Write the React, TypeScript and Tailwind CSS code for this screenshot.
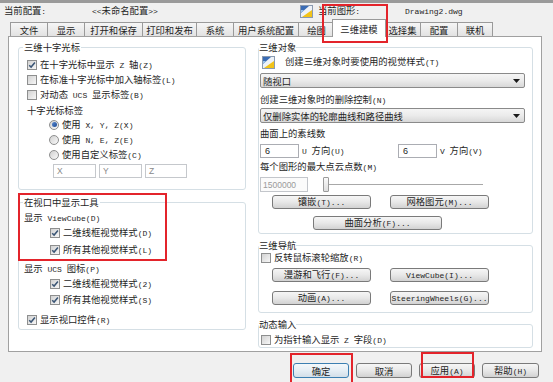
import React from "react";

function T({ s }: { s: string }) {
  const parts = s.match(/[\x20-\x7E]+|[^\x20-\x7E]+/g) || [];
  return (
    <span className="whitespace-pre">
      {parts.map((p, i) =>
        /^[\x20-\x7E]+$/.test(p) ? (
          <span key={i} className="font-['Liberation_Mono',monospace] text-[8px]">
            {p}
          </span>
        ) : (
          <span key={i}>{p}</span>
        )
      )}
    </span>
  );
}

function Check({ on }: { on?: boolean }) {
  return (
    <span className="w-[10px] h-[10px] shrink-0 border border-[#8e8f8f] bg-white flex items-center justify-center">
      <span className="w-[8px] h-[8px] bg-linear-to-br from-[#d2d2d2] to-[#f7f7f7] flex items-center justify-center">
        {on && (
          <svg width="8" height="8" viewBox="0 0 8 8">
            <path d="M1.2 4.2 L3.1 6.1 L6.9 1.6" stroke="#3a5575" strokeWidth="1.5" fill="none" />
          </svg>
        )}
      </span>
    </span>
  );
}

function Radio({ on }: { on?: boolean }) {
  return (
    <span className="w-[10px] h-[10px] shrink-0 rounded-full border border-[#8e8f8f] bg-linear-to-br from-[#d0d0d0] to-[#fafafa] flex items-center justify-center">
      {on && <span className="w-[5px] h-[5px] rounded-full bg-linear-to-br from-[#5a8ad0] to-[#1c4a94]" />}
    </span>
  );
}

function Btn({ s, className }: { s: string; className: string }) {
  return (
    <div
      className={
        "h-[14px] shrink-0 border border-[#7a7a7a] rounded-[3px] bg-linear-to-b from-[#f6f6f6] via-[#e8e8e8] to-[#d2d2d2] flex items-center justify-center " +
        className
      }
    >
      <T s={s} />
    </div>
  );
}

function DwgIcon() {
  return (
    <svg width="13" height="13" viewBox="0 0 13 13" className="shrink-0">
      <rect x="0.5" y="0.5" width="12" height="12" fill="#eef2f7" stroke="#8a9ab0" />
      <path d="M1 1 H9 L1 8 Z" fill="#3a6cb5" />
      <path d="M1 5 H4 L1 8 Z" fill="#9cc3ea" />
      <path d="M2 12 L12 5 V12 Z" fill="#f2c318" />
    </svg>
  );
}

function Select({ s }: { s: string }) {
  return (
    <div className="ml-[1px] h-[15px] w-[265px] border border-[#8a8a8a] rounded-[2px] bg-linear-to-b from-[#f5f5f5] via-[#ebebeb] to-[#d8d8d8] flex items-center pl-[2px] pr-[4px]">
      <T s={s} />
      <svg width="7" height="4" viewBox="0 0 7 4" className="ml-auto">
        <path d="M0 0 H7 L3.5 4 Z" fill="#1a1a1a" />
      </svg>
    </div>
  );
}

const tabs: { s: string; w: string; sel?: boolean; last?: boolean }[] = [
  { s: "文件", w: "w-[37px]" },
  { s: "显示", w: "w-[37px]" },
  { s: "打开和保存", w: "w-[58px]" },
  { s: "打印和发布", w: "w-[54px]" },
  { s: "系统", w: "w-[37px]" },
  { s: "用户系统配置", w: "w-[65px]" },
  { s: "绘图", w: "w-[36px]" },
  { s: "三维建模", w: "w-[54px]", sel: true },
  { s: "选择集", w: "w-[36px]" },
  { s: "配置", w: "w-[37px]" },
  { s: "联机", w: "w-[36px]", last: true },
];

export default function App() {
  return (
    <div className="relative w-[553px] h-[382px] overflow-hidden bg-[#f0f0f0] font-['Noto_Sans_CJK_SC',sans-serif] text-[9.33px] leading-[12px] text-[#1e1e1e]">
      {/* top strip */}
      <div className="h-[3px] bg-[#9a9a9a]" />
      {/* header */}
      <div className="h-[16px] flex items-center pl-[4px]">
        <div className="w-[88px]">
          <T s="当前配置:" />
        </div>
        <div className="w-[208px]">
          <T s="<<未命名配置>>" />
        </div>
        <DwgIcon />
        <div className="ml-[5px] w-[87px]">
          <T s="当前图形:" />
        </div>
        <T s="Drawing2.dwg" />
      </div>
      {/* tabs */}
      <div className="h-[17px] flex items-end pl-[10px]">
        {tabs.map((t) =>
          t.sel ? (
            <div
              key={t.s}
              className={
                "relative z-10 h-[18px] -mb-[1px] -mx-[2px] border-t border-l border-r border-[#9a9a9a] bg-white flex items-center justify-center " +
                t.w
              }
            >
              <T s={t.s} />
            </div>
          ) : (
            <div
              key={t.s}
              className={
                "h-[14px] border-t border-l border-[#9a9a9a] bg-linear-to-b from-[#f6f6f6] to-[#e2e2e2] flex items-center justify-center " +
                t.w +
                (t.last ? " border-r" : "")
              }
            >
              <T s={t.s} />
            </div>
          )
        )}
      </div>
      {/* panel */}
      <div className="ml-[8px] w-[534px] h-[316px] border border-[#a0a0a0] bg-white pt-[4px] pl-[9px] pr-[8px] flex gap-[12px]">
        {/* left column */}
        <div className="w-[228px] flex flex-col">
          <fieldset className="border border-[#d5dfe5] rounded-[3px] pb-[11px]">
            <legend className="ml-[4px] px-[1px] leading-[12px]">
              <T s="三维十字光标" />
            </legend>
            <div className="mt-[4px] h-[15px] flex items-center pl-[8px] gap-[3px]">
              <Check on />
              <T s="在十字光标中显示 Z 轴(Z)" />
            </div>
            <div className="h-[15px] flex items-center pl-[8px] gap-[3px]">
              <Check />
              <T s="在标准十字光标中加入轴标签(L)" />
            </div>
            <div className="h-[15px] flex items-center pl-[8px] gap-[3px]">
              <Check />
              <T s="对动态 UCS 显示标签(B)" />
            </div>
            <div className="h-[15px] flex items-center pl-[8px]">
              <T s="十字光标标签" />
            </div>
            <div className="h-[15px] flex items-center pl-[30px] gap-[3px]">
              <Radio on />
              <T s="使用 X, Y, Z(X)" />
            </div>
            <div className="h-[15px] flex items-center pl-[30px] gap-[3px]">
              <Radio />
              <T s="使用 N, E, Z(E)" />
            </div>
            <div className="h-[15px] flex items-center pl-[30px] gap-[3px]">
              <Radio />
              <T s="使用自定义标签(C)" />
            </div>
            <div className="mt-[2px] h-[14px] flex pl-[34px] gap-[3px] font-['Liberation_Sans',sans-serif] text-[8.5px] text-[#8a8a8a]">
              <div className="w-[43px] h-[14px] border border-[#c5c8cc] bg-white flex items-center pl-[3px]">X</div>
              <div className="w-[43px] h-[14px] border border-[#c5c8cc] bg-white flex items-center pl-[3px]">Y</div>
              <div className="w-[42px] h-[14px] border border-[#c5c8cc] bg-white flex items-center pl-[3px]">Z</div>
            </div>
          </fieldset>
          <fieldset className="mt-[6px] border border-[#d5dfe5] rounded-[3px] pb-[1px]">
            <legend className="ml-[4px] px-[1px] leading-[12px]">
              <T s="在视口中显示工具" />
            </legend>
            <div className="mt-[2px] h-[16px] flex items-center pl-[5px]">
              <T s="显示 ViewCube(D)" />
            </div>
            <div className="h-[14px] flex items-center pl-[31px] gap-[3px]">
              <Check on />
              <T s="二维线框视觉样式(D)" />
            </div>
            <div className="mt-[2px] h-[16px] flex items-center pl-[31px] gap-[3px]">
              <Check on />
              <T s="所有其他视觉样式(L)" />
            </div>
            <div className="mt-[3px] h-[16px] flex items-center pl-[5px]">
              <T s="显示 UCS 图标(P)" />
            </div>
            <div className="h-[13px] flex items-center pl-[31px] gap-[3px]">
              <Check on />
              <T s="二维线框视觉样式(2)" />
            </div>
            <div className="mt-[2px] h-[16px] flex items-center pl-[31px] gap-[3px]">
              <Check on />
              <T s="所有其他视觉样式(S)" />
            </div>
            <div className="mt-[4px] h-[16px] flex items-center pl-[8px] gap-[3px]">
              <Check on />
              <T s="显示视口控件(R)" />
            </div>
          </fieldset>
        </div>
        {/* right column */}
        <div className="w-[275px] flex flex-col">
          <fieldset className="border border-[#d5dfe5] rounded-[3px] pb-[3px]">
            <legend className="leading-[12px]">
              <T s="三维对象" />
            </legend>
            <div className="mt-[2px] h-[14px] flex items-center pl-[3px]">
              <DwgIcon />
              <span className="ml-[10px]">
                <T s="创建三维对象时要使用的视觉样式(T)" />
              </span>
            </div>
            <div className="mt-[4px]">
              <Select s="随视口" />
            </div>
            <div className="mt-[5px] h-[14px] flex items-center pl-[1px]">
              <T s="创建三维对象时的删除控制(N)" />
            </div>
            <div className="mt-[1px]">
              <Select s="仅删除实体的轮廓曲线和路径曲线" />
            </div>
            <div className="mt-[3px] h-[14px] flex items-center pl-[1px]">
              <T s="曲面上的素线数" />
            </div>
            <div className="mt-[4px] h-[14px] flex items-center pl-[1px]">
              <div className="w-[39px] h-[14px] border border-[#abadb3] bg-white flex items-center pl-[4px] font-['Liberation_Sans',sans-serif] text-[9px]">
                6
              </div>
              <div className="ml-[3px] w-[96px]">
                <T s="U 方向(U)" />
              </div>
              <div className="w-[39px] h-[14px] border border-[#abadb3] bg-white flex items-center pl-[4px] font-['Liberation_Sans',sans-serif] text-[9px]">
                6
              </div>
              <div className="ml-[3px]">
                <T s="V 方向(V)" />
              </div>
            </div>
            <div className="mt-[2px] h-[14px] flex items-center pl-[1px]">
              <T s="每个图形的最大点云点数(M)" />
            </div>
            <div className="mt-[3px] h-[15px] flex items-center pl-[1px]">
              <div className="w-[48px] h-[15px] border border-[#c3c6cb] bg-[#fbfbfb] flex items-center pl-[2px] font-['Liberation_Sans',sans-serif] text-[8.5px] text-[#9a9a9a]">
                1500000
              </div>
              <div className="ml-[15px] w-[6px] h-[15px] border border-[#9a9a9a] rounded-[1px] bg-linear-to-b from-[#fafafa] to-[#dedede]" />
              <div className="w-[154px] h-[2px] border-t border-[#a8a8a8] border-b border-b-white bg-[#e4e4e4] mt-[1px]" />
            </div>
            <div className="mt-[3px] h-[14px] flex items-center pl-[13px] gap-[19px]">
              <Btn s="镶嵌(T)..." className="w-[99px]" />
              <Btn s="网格图元(M)..." className="w-[99px]" />
            </div>
            <div className="mt-[7px] h-[14px] flex items-center pl-[54px]">
              <Btn s="曲面分析(F)..." className="w-[129px]" />
            </div>
          </fieldset>
          <fieldset className="mt-[5px] border border-[#d5dfe5] rounded-[3px] pb-[7px]">
            <legend className="leading-[12px]">
              <T s="三维导航" />
            </legend>
            <div className="h-[14px] flex items-center pl-[2px] gap-[3px]">
              <Check />
              <T s="反转鼠标滚轮缩放(R)" />
            </div>
            <div className="mt-[3px] h-[14px] flex items-center pl-[13px] gap-[19px]">
              <Btn s="漫游和飞行(F)..." className="w-[99px]" />
              <Btn s="ViewCube(I)..." className="w-[99px]" />
            </div>
            <div className="mt-[9px] h-[14px] flex items-center pl-[13px] gap-[19px]">
              <Btn s="动画(A)..." className="w-[99px]" />
              <Btn s="SteeringWheels(G)..." className="w-[99px]" />
            </div>
          </fieldset>
          <fieldset className="mt-[5px] border border-[#d5dfe5] rounded-[3px]">
            <legend className="leading-[12px]">
              <T s="动态输入" />
            </legend>
            <div className="mt-[3px] h-[14px] flex items-center pl-[2px] gap-[3px]">
              <Check />
              <T s="为指针输入显示 Z 字段(D)" />
            </div>
          </fieldset>
        </div>
      </div>
      {/* bottom buttons */}
      <div className="mt-[11px] h-[15px] flex pl-[293px] gap-[7px]">
        <div className="w-[56px] h-[15px] border border-[#3c7fb1] rounded-[3px] bg-linear-to-b from-[#f4f8fb] via-[#e6eef4] to-[#d3dfe8] flex items-center justify-center">
          <T s="确定" />
        </div>
        <Btn s="取消" className="w-[56px] h-[15px]" />
        <Btn s="应用(A)" className="w-[56px] h-[15px]" />
        <Btn s="帮助(H)" className="w-[57px] h-[15px]" />
      </div>
      {/* red annotation boxes */}
      <div className="absolute left-[322px] top-[4px] w-[66px] h-[39px] border-2 border-[#e3242b]" />
      <div className="absolute left-[18px] top-[193px] w-[149px] h-[68px] border-2 border-[#e3242b]" />
      <div className="absolute left-[290px] top-[353px] w-[63px] h-[32px] border-2 border-[#e3242b]" />
      <div className="absolute left-[421px] top-[352px] w-[53px] h-[26px] border-2 border-[#e3242b]" />
    </div>
  );
}
